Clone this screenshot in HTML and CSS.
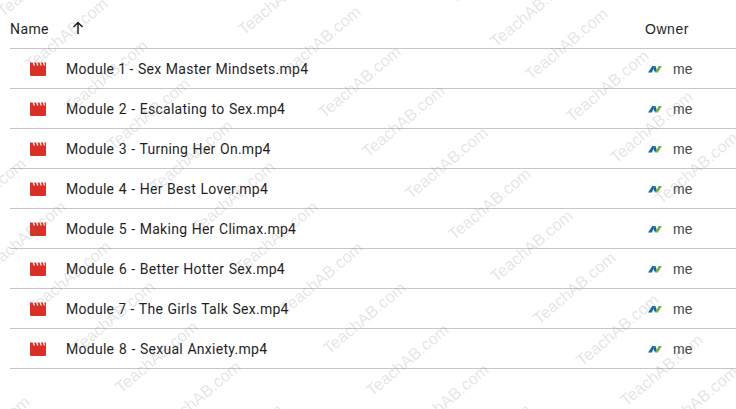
FILE: index.html
```html
<!DOCTYPE html>
<html lang="en">
<head>
  <meta charset="UTF-8">
  <title>Files</title>
  <link rel="stylesheet" href="styles.css">
</head>
<body>
<!-- shared icons -->
<svg class="defs" width="0" height="0">
  <symbol id="video" viewBox="0 0 16 14">
    <path d="M0 .5h16v12.200a1.200 1.200 0 0 1-1.200 1.200H1.200A1.200 1.200 0 0 1 0 12.700z" fill="#d93025"/>
    <path d="M2.600 0h1.300l1.100 3.600H3.700zM6 0h1.300l1.100 3.600H7.100zM9.400 0h1.300l1.100 3.600h-1.300zM12.800 0h1.300l1.100 3.600h-1.300z" fill="#fff"/>
  </symbol>
  <symbol id="logo" viewBox="0 0 20 20">
    <circle cx="10" cy="10" r="9.500" fill="#fff" stroke="#f8f8f8"/>
    <path d="M3 13.500 7.300 7h3.200l-2 3-1.700 3.500z" fill="#0f6ca8"/>
    <path d="M8.500 10 10.500 7l1.300 4-1.800 2.500z" fill="#1d5f8e"/>
    <path d="M10 13.500 11.800 11l1.700-4H17l-4.300 6.500z" fill="#6cb33f"/>
  </symbol>
</svg>

<div class="list">
  <div class="head">
    <div class="col-name">
      <span>Name</span>
      <svg class="arrow" width="16" height="16" viewBox="0 0 16 16">
        <path d="M8 14V3M3.500 7 8 2.500 12.500 7" fill="none" stroke="#1f1f1f" stroke-width="1.500"/>
      </svg>
    </div>
    <div class="col-owner">Owner</div>
  </div>

  <div class="row">
    <div class="col-name"><svg class="file-icon"><use href="#video"/></svg><span class="file">Module 1 - Sex Master Mindsets.mp4</span></div>
    <div class="col-owner"><svg class="avatar"><use href="#logo"/></svg><span class="me">me</span></div>
  </div>
  <div class="row">
    <div class="col-name"><svg class="file-icon"><use href="#video"/></svg><span class="file">Module 2 - Escalating to Sex.mp4</span></div>
    <div class="col-owner"><svg class="avatar"><use href="#logo"/></svg><span class="me">me</span></div>
  </div>
  <div class="row">
    <div class="col-name"><svg class="file-icon"><use href="#video"/></svg><span class="file">Module 3 - Turning Her On.mp4</span></div>
    <div class="col-owner"><svg class="avatar"><use href="#logo"/></svg><span class="me">me</span></div>
  </div>
  <div class="row">
    <div class="col-name"><svg class="file-icon"><use href="#video"/></svg><span class="file">Module 4 - Her Best Lover.mp4</span></div>
    <div class="col-owner"><svg class="avatar"><use href="#logo"/></svg><span class="me">me</span></div>
  </div>
  <div class="row">
    <div class="col-name"><svg class="file-icon"><use href="#video"/></svg><span class="file">Module 5 - Making Her Climax.mp4</span></div>
    <div class="col-owner"><svg class="avatar"><use href="#logo"/></svg><span class="me">me</span></div>
  </div>
  <div class="row">
    <div class="col-name"><svg class="file-icon"><use href="#video"/></svg><span class="file">Module 6 - Better Hotter Sex.mp4</span></div>
    <div class="col-owner"><svg class="avatar"><use href="#logo"/></svg><span class="me">me</span></div>
  </div>
  <div class="row">
    <div class="col-name"><svg class="file-icon"><use href="#video"/></svg><span class="file">Module 7 - The Girls Talk Sex.mp4</span></div>
    <div class="col-owner"><svg class="avatar"><use href="#logo"/></svg><span class="me">me</span></div>
  </div>
  <div class="row">
    <div class="col-name"><svg class="file-icon"><use href="#video"/></svg><span class="file">Module 8 - Sexual Anxiety.mp4</span></div>
    <div class="col-owner"><svg class="avatar"><use href="#logo"/></svg><span class="me">me</span></div>
  </div>
</div>

<!-- watermark over the whole page -->
<svg class="watermark" width="736" height="409" viewBox="0 0 736 409">
  <g transform="translate(6 1)">
    <text x="-3" y="17" transform="rotate(-40 -3 17)">TeachAB.com</text>
    <text x="25" y="70" transform="rotate(-40 25 70)">TeachAB.com</text>
    <text x="65" y="112" transform="rotate(-40 65 112)">TeachAB.com</text>
    <text x="107" y="150" transform="rotate(-40 107 150)">TeachAB.com</text>
    <text x="150" y="192" transform="rotate(-40 150 192)">TeachAB.com</text>
    <text x="192" y="233" transform="rotate(-40 192 233)">TeachAB.com</text>
    <text x="235" y="273" transform="rotate(-40 235 273)">TeachAB.com</text>
    <text x="280" y="314" transform="rotate(-40 280 314)">TeachAB.com</text>
    <text x="323" y="354" transform="rotate(-40 323 354)">TeachAB.com</text>
    <text x="366" y="396" transform="rotate(-40 366 396)">TeachAB.com</text>
    <text x="406" y="436" transform="rotate(-40 406 436)">TeachAB.com</text>

    <text x="238" y="35" transform="rotate(-40 238 35)">TeachAB.com</text>
    <text x="278" y="78" transform="rotate(-40 278 78)">TeachAB.com</text>
    <text x="318" y="118" transform="rotate(-40 318 118)">TeachAB.com</text>
    <text x="362" y="157" transform="rotate(-40 362 157)">TeachAB.com</text>
    <text x="405" y="199" transform="rotate(-40 405 199)">TeachAB.com</text>
    <text x="448" y="240" transform="rotate(-40 448 240)">TeachAB.com</text>
    <text x="490" y="282" transform="rotate(-40 490 282)">TeachAB.com</text>
    <text x="533" y="324" transform="rotate(-40 533 324)">TeachAB.com</text>
    <text x="576" y="366" transform="rotate(-40 576 366)">TeachAB.com</text>
    <text x="620" y="406" transform="rotate(-40 620 406)">TeachAB.com</text>

    <text x="448" y="3" transform="rotate(-40 448 3)">TeachAB.com</text>
    <text x="490" y="47" transform="rotate(-40 490 47)">TeachAB.com</text>
    <text x="525" y="80" transform="rotate(-40 525 80)">TeachAB.com</text>
    <text x="566" y="122" transform="rotate(-40 566 122)">TeachAB.com</text>
    <text x="610" y="163" transform="rotate(-40 610 163)">TeachAB.com</text>
    <text x="655" y="204" transform="rotate(-40 655 204)">TeachAB.com</text>

    <text x="-57" y="230" transform="rotate(-40 -57 230)">TeachAB.com</text>
    <text x="-17" y="273" transform="rotate(-40 -17 273)">TeachAB.com</text>
    <text x="28" y="313" transform="rotate(-40 28 313)">TeachAB.com</text>
    <text x="72" y="353" transform="rotate(-40 72 353)">TeachAB.com</text>
    <text x="115" y="393" transform="rotate(-40 115 393)">TeachAB.com</text>
    <text x="158" y="433" transform="rotate(-40 158 433)">TeachAB.com</text>

    <text x="-53" y="468" transform="rotate(-40 -53 468)">TeachAB.com</text>
    <text x="655" y="438" transform="rotate(-40 655 438)">TeachAB.com</text>
    <text x="200" y="476" transform="rotate(-40 200 476)">TeachAB.com</text>
    <text x="448" y="476" transform="rotate(-40 448 476)">TeachAB.com</text>
  </g>
</svg>
</body>
</html>
```

FILE: styles.css
```css
* {
  box-sizing: border-box;
}

body {
  margin: 0;
  width: 736px;
  height: 409px;
  overflow: hidden;
  position: relative;
  background: #fff;
  font-family: "Roboto", sans-serif;
  font-size: 14px;
  color: #1f1f1f;
}

.defs {
  display: block;
}

.list {
  margin-left: 10px;
}

.head,
.row {
  display: flex;
  align-items: center;
  border-bottom: 1px solid #c7c7c7;
}

.head {
  height: 49px;
  padding-top: 10px;
}

.row {
  height: 40px;
}

.col-name {
  flex: 1;
  display: flex;
  align-items: center;
  min-width: 0;
}

.col-owner {
  width: 91px;
  display: flex;
  align-items: center;
  font-family: "Liberation Sans", sans-serif;
}

.head .col-owner {
  letter-spacing: 0.55px;
}

.head .col-name span {
  letter-spacing: 0.4px;
}

.arrow {
  margin-left: 21px;
  margin-bottom: 2px;
  flex: none;
}

.file-icon {
  width: 16px;
  height: 14px;
  margin-left: 20px;
  margin-right: 20px;
  flex: none;
}

.file {
  letter-spacing: 0.28px;
  word-spacing: 0.6px;
  font-variant-numeric: proportional-nums;
  white-space: nowrap;
}

.avatar {
  width: 20px;
  height: 20px;
  flex: none;
}

.me {
  margin-left: 8px;
  letter-spacing: 0.2px;
  color: #444746;
}

.watermark {
  position: absolute;
  top: 0;
  left: 0;
  pointer-events: none;
  font-family: "Liberation Sans", sans-serif;
  font-size: 16.5px;
  fill: rgba(120, 120, 120, 0.2);
}
```
